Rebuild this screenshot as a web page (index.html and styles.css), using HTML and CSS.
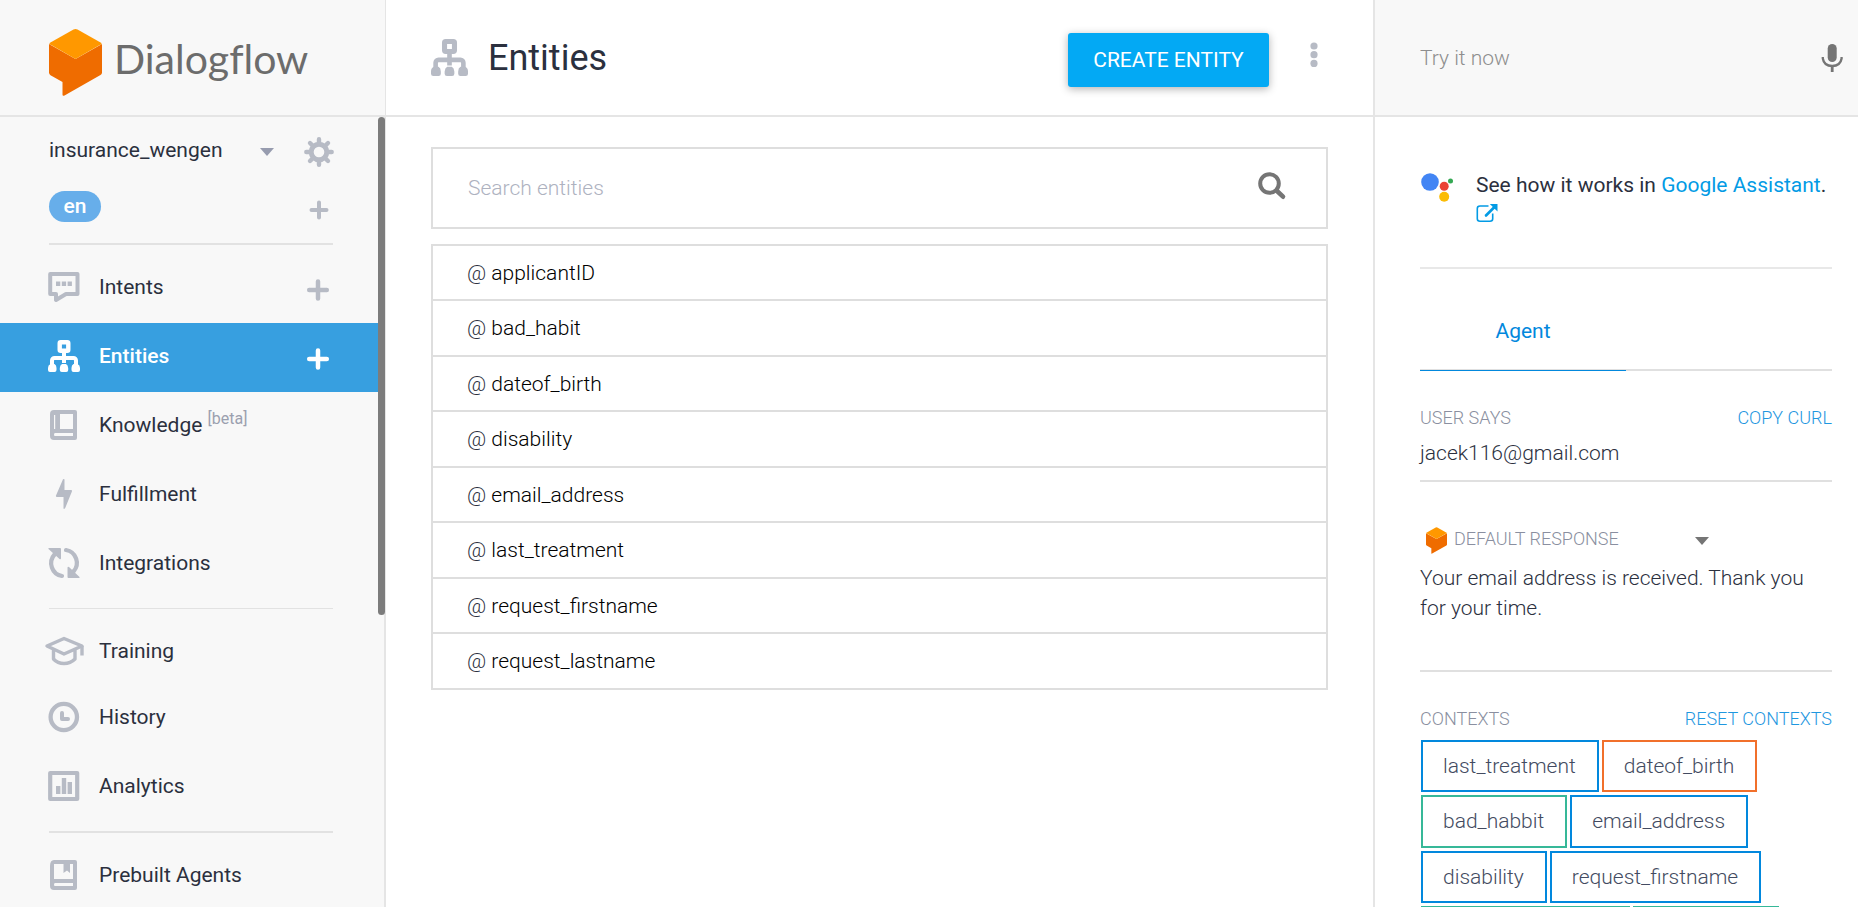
FILE: index.html
```html
<!DOCTYPE html>
<html lang="en">
<head>
<meta charset="utf-8">
<title>Dialogflow - Entities</title>
<link rel="stylesheet" href="styles.css">
</head>
<body>
<svg class="defs" aria-hidden="true">
  <symbol id="i-logo" viewBox="0 0 53 67">
    <path fill="#ef6c00" d="M0 15 L26.500 30 L53 15 V43.500 Q53 45 51.500 46 L15.500 66.500 Q13.500 67.500 13.500 65.500 V53 L1.500 46.200 Q0 45.200 0 43.500 Z"/>
    <path fill="#ff9800" d="M24.500 .6 Q26.500 -.4 28.500 .6 L52 13.800 Q53 14.500 52 15.200 L26.500 30 L1 15.200 Q0 14.500 1 13.800 Z"/>
  </symbol>
  <symbol id="i-tree" viewBox="0 0 32 32">
    <path fill="none" stroke="currentColor" stroke-width="4" d="M16 11v12M4 25v-4.500a2.500 2.500 0 0 1 2.500-2.500h19a2.500 2.500 0 0 1 2.500 2.500V25"/>
    <rect x="11.700" y="2.200" width="8.600" height="8.600" rx="1" fill="none" stroke="currentColor" stroke-width="4.400"/>
    <path fill="currentColor" d="M2.500 24h4q2 1 2 4v2q0 2-2 2h-4.500q-2 0-2-2v-2q0-3 2.500-4zM14 24h4q2 1 2.200 4v2q0 2-2 2h-4.400q-2 0-2-2v-2q.2-3 2.200-4zM25.500 24h4q2.500 1 2.500 4v2q0 2-2 2h-4.500q-2 0-2-2v-2q0-3 2-4z"/>
  </symbol>
  <symbol id="i-plus" viewBox="0 0 24 24">
    <path fill="none" stroke="currentColor" stroke-width="4.500" stroke-linecap="round" d="M12 3.500v17M3.200 12h17.600"/>
  </symbol>
  <symbol id="i-caret" viewBox="0 0 16 8"><path fill="currentColor" d="M1 0h14L8 8z"/></symbol>
</svg>

<div class="app">
  <aside class="sidebar">
    <header class="brand">
      <svg class="brand-mark"><use href="#i-logo"/></svg>
      <span class="brand-name">Dialogflow</span>
    </header>

    <div class="sidebar-body">
      <div class="agent-row">
        <label class="picker agent-picker">
          <select aria-label="Agent"><option>insurance_wengen</option></select>
          <svg class="caret"><use href="#i-caret"/></svg>
        </label>
        <button class="icon-button" aria-label="Agent settings">
          <svg class="gear" viewBox="0 0 30 30" fill="none" stroke="currentColor">
            <circle cx="15" cy="15" r="7.800" stroke-width="5"/>
            <path stroke-width="4.400" stroke-linecap="round" d="M15 2.300v4M15 23.700v4M2.300 15h4M23.700 15h4M6 6l3 3M21 21l3 3M24 6l-3 3M9 21l-3 3"/>
          </svg>
        </button>
      </div>
      <div class="lang-row">
        <span class="lang">en</span>
        <button class="icon-button" aria-label="Add language"><svg class="lang-plus" viewBox="0 0 30 24"><path fill="none" stroke="currentColor" stroke-width="4" stroke-linecap="round" d="M15 4.500v15M7.500 12h15"/></svg></button>
      </div>

      <nav class="nav">
        <hr class="rule">
        <div class="nav-item">
          <a href="#intents" class="nav-link">
            <svg class="nav-icon" viewBox="0 0 32 32"><path fill="none" stroke="currentColor" stroke-width="4" stroke-linejoin="round" d="M2.200 3h27.300v20H18l-10 6V23H2.200z"/><path fill="currentColor" d="M8 10.500h4.300v4.500H8zM13.800 10.500h4.300v4.500h-4.300zM19.600 10.500h4.300v4.500h-4.300z"/></svg>
            Intents</a>
          <a href="#new-intent" class="nav-plus" aria-label="Create intent"><svg><use href="#i-plus"/></svg></a>
        </div>
        <div class="nav-item nav-item--active">
          <a href="#entities" class="nav-link" aria-current="page">
            <svg class="nav-icon"><use href="#i-tree"/></svg>
            Entities</a>
          <a href="#new-entity" class="nav-plus" aria-label="Create entity"><svg><use href="#i-plus"/></svg></a>
        </div>
        <div class="nav-item">
          <a href="#knowledge" class="nav-link">
            <svg class="nav-icon" viewBox="0 0 32 32"><path fill="currentColor" fill-rule="evenodd" d="M6 1h21q2 0 2 2v26q0 2-2 2H6q-4 0-4-4V5q0-4 4-4zM12 5v15h13V5zM7 24q-1 0-1 1.500T7 27h18v-3zM6 6v14h1.200V6z"/></svg>
            <span>Knowledge <span class="beta">[beta]</span></span></a>
        </div>
        <div class="nav-item">
          <a href="#fulfillment" class="nav-link">
            <svg class="nav-icon" viewBox="0 0 32 32"><path fill="currentColor" d="M15 1.300q1.700-1.200 1.500 1V12h6.500q1.500 0 .9 1.600L17.200 30q-1.800 2.300-1.700-.5V19H9q-1.500 0-1-1.600z"/></svg>
            Fulfillment</a>
        </div>
        <div class="nav-item">
          <a href="#integrations" class="nav-link">
            <svg class="nav-icon" viewBox="0 0 32 32"><path fill="none" stroke="currentColor" stroke-width="4.200" stroke-linecap="round" d="M14 29A13 13 0 0 1 6.500 7.500M18 3a13 13 0 0 1 7.500 21.500"/><path fill="currentColor" d="M1 1h11q1 0 1 1v9q0 2-1.500 1L.5 2Q0 1 1 1zM31 31H20.500q-1 0-1-1v-9q0-2 1.500-1l10.500 10q.5 1-.5 1z"/></svg>
            Integrations</a>
        </div>
        <hr class="rule rule--thin">
        <div class="nav-item nav-item--short">
          <a href="#training" class="nav-link">
            <svg class="nav-icon" viewBox="0 0 32 32" fill="none" stroke="currentColor" stroke-width="3.400" stroke-linejoin="round"><path d="M-1 11 16 3.500 34 11 16 19zM5.500 14.500v9.500q4 4.500 10.500 4.500T27 24v-9.500"/><path d="M34 11v9.500"/></svg>
            Training</a>
        </div>
        <div class="nav-item">
          <a href="#history" class="nav-link">
            <svg class="nav-icon" viewBox="0 0 32 32" fill="none" stroke="currentColor"><circle cx="15.800" cy="16" r="13.200" stroke-width="4.300"/><path stroke-width="4" stroke-linecap="round" stroke-linejoin="round" d="M14 12v6h6"/></svg>
            History</a>
        </div>
        <div class="nav-item">
          <a href="#analytics" class="nav-link">
            <svg class="nav-icon" viewBox="0 0 32 32"><rect x="2.200" y="3" width="27" height="26" fill="none" stroke="currentColor" stroke-width="4.200" stroke-linejoin="round"/><path stroke="currentColor" stroke-width="4.400" stroke-linecap="butt" d="M10.200 16v8M16 8v16M21.800 12v12"/></svg>
            Analytics</a>
        </div>
        <hr class="rule">
        <div class="nav-item">
          <a href="#prebuilt" class="nav-link">
            <svg class="nav-icon" viewBox="0 0 32 32"><path fill="currentColor" fill-rule="evenodd" d="M6 1h21q2 0 2 2v26q0 2-2 2H6q-4 0-4-4V7q0-6 4-6zM6 5v15h19V5h-3v9l-3-2.500L15.500 14V5zM7 24q-1 0-1 1.500T7 27h18v-3z"/></svg>
            Prebuilt Agents</a>
        </div>
      </nav>
      <div class="scroll-thumb"></div>
    </div>
  </aside>

  <main class="main">
    <header class="main-head">
      <svg class="title-icon"><use href="#i-tree"/></svg>
      <h1>Entities</h1>
      <button class="create">CREATE ENTITY</button>
      <button class="icon-button more" aria-label="More options">
        <svg viewBox="0 0 8 26" fill="currentColor"><circle cx="4" cy="4" r="3.600"/><circle cx="4" cy="12.700" r="3.600"/><circle cx="4" cy="21.400" r="3.600"/></svg>
      </button>
    </header>
    <div class="main-body">
      <form class="search">
        <input type="text" placeholder="Search entities" aria-label="Search entities">
        <button type="button" class="icon-button search-button" aria-label="Search">
          <svg viewBox="0 0 28 28" fill="none" stroke="currentColor"><circle cx="11.500" cy="11.500" r="9.300" stroke-width="4"/><path stroke-width="4.600" stroke-linecap="round" d="m18.500 18.500 6.500 6.200"/></svg>
        </button>
      </form>
      <ul class="entities">
        <li><a href="#e1"><span class="at">@</span> applicantID</a></li>
        <li><a href="#e2"><span class="at">@</span> bad_habit</a></li>
        <li><a href="#e3"><span class="at">@</span> dateof_birth</a></li>
        <li><a href="#e4"><span class="at">@</span> disability</a></li>
        <li><a href="#e5"><span class="at">@</span> email_address</a></li>
        <li><a href="#e6"><span class="at">@</span> last_treatment</a></li>
        <li><a href="#e7"><span class="at">@</span> request_firstname</a></li>
        <li><a href="#e8"><span class="at">@</span> request_lastname</a></li>
      </ul>
    </div>
  </main>

  <aside class="tester">
    <header class="try">
      <input type="text" placeholder="Try it now" aria-label="Try it now">
      <button class="icon-button mic" aria-label="Speak">
        <svg viewBox="0 0 22 30"><rect x="6.700" y="1" width="9" height="18" rx="4.500" fill="currentColor"/><path fill="none" stroke="currentColor" stroke-width="2.300" d="M1.800 14v1.500Q3 23 11.200 23T20.600 15.500V14"/><path stroke="currentColor" stroke-width="2.800" d="M11.200 23v6"/></svg>
      </button>
    </header>
    <div class="tester-body">
      <section class="assistant">
        <svg class="assistant-icon" viewBox="0 0 34 30"><circle cx="10" cy="10" r="8.800" fill="#4285f4"/><circle cx="24.200" cy="14.200" r="4.500" fill="#ea4335"/><circle cx="24.200" cy="24.700" r="5" fill="#fbbc05"/><circle cx="30.500" cy="9" r="2.500" fill="#34a853"/></svg>
        <p>See how it works in <a href="#assistant">Google Assistant</a>. <a href="#assistant" aria-label="Open Google Assistant"><svg class="external" viewBox="0 0 22 19"><path fill="none" stroke="currentColor" stroke-width="1.600" d="M12.500 2H4Q1.300 2 1.300 4.500v10.200Q1.300 17.200 4 17.200h10q2.700 0 2.700-2.500V9.500"/><path fill="none" stroke="currentColor" stroke-width="2.600" stroke-linecap="round" d="M10 11.500 18 3.500"/><path fill="currentColor" d="M13.800 0H21.500V7.500z"/></svg></a></p>
      </section>
      <div class="tabs" role="tablist"><button class="tab" role="tab" aria-selected="true">Agent</button></div>
      <section class="says">
        <div class="caption"><h2>USER SAYS</h2><a href="#curl">COPY CURL</a></div>
        <p>jacek116@gmail.com</p>
      </section>
      <section class="response">
        <div class="response-head">
          <svg class="mini-logo"><use href="#i-logo"/></svg>
          <label class="picker response-picker">
            <select aria-label="Response"><option>DEFAULT RESPONSE</option></select>
            <svg class="caret"><use href="#i-caret"/></svg>
          </label>
        </div>
        <p>Your email address is received. Thank you for your time.</p>
      </section>
      <section class="contexts">
        <div class="caption"><h2>CONTEXTS</h2><a href="#reset">RESET CONTEXTS</a></div>
        <ul class="chips">
          <li class="chip">last_treatment</li>
          <li class="chip chip--orange">dateof_birth</li>
          <li class="chip chip--green">bad_habbit</li>
          <li class="chip">email_address</li>
          <li class="chip">disability</li>
          <li class="chip">request_firstname</li>
          <li class="chip chip--green">request_lastname</li>
          <li class="chip chip--green">bad_habbit</li>
        </ul>
      </section>
    </div>
  </aside>
</div>
</body>
</html>
```

FILE: styles.css
```css
:root {
  --ink: #2b303e;
  --icon: #b7bbc5;
  --line: #e5e5e5;
  --box-line: #dedede;
  --panel: #f8f8f8;
  --link: #039be5;
  --muted: #9ba0af;
}
* { box-sizing: border-box; margin: 0; padding: 0; }
body { font: 400 21px/30px Roboto, "Liberation Sans", sans-serif; color: var(--ink); background: #fff; }
a { color: inherit; text-decoration: none; }
ul { list-style: none; }
button, input, select { font: inherit; color: inherit; background: none; border: 0; outline: 0; }
button { cursor: pointer; }
svg { display: block; flex: none; overflow: visible; }
.defs { position: absolute; width: 0; height: 0; }
.icon-button { display: block; color: var(--icon); }

.app { display: grid; grid-template-columns: 386px minmax(0, 1fr) 485px; height: 100vh; overflow: hidden; }
.sidebar, .main, .tester { display: flex; flex-direction: column; min-width: 0; min-height: 0; }
.brand, .main-head, .try { display: flex; align-items: center; flex: none; height: 117px; border-bottom: 2px solid var(--line); }

/* Drop-downs: the caret shares the select's grid cell */
.picker { display: grid; align-items: center; }
.picker select { grid-area: 1 / 1; appearance: none; width: 100%; cursor: pointer; }
.picker .caret { grid-area: 1 / 1; justify-self: end; width: 16px; height: 8px; margin-top: 3px; pointer-events: none; }

/* Sidebar */
.sidebar { background: var(--panel); }
.brand { align-items: flex-start; gap: 12px; padding: 29px 0 0 49px; border-right: 1px solid var(--line); }
.brand-mark { width: 53px; height: 67px; }
.brand-name { font: 400 41px/60px Lato, sans-serif; font-variant-ligatures: none; color: #6c6c6c; }
.sidebar-body { position: relative; flex: 1; min-height: 0; padding-right: 6px; border-right: 2px solid var(--line); }
.scroll-thumb { position: absolute; top: 0; right: -1px; width: 7px; height: 63%; border-radius: 4px; background: #7c7c7c; }
.agent-row { display: flex; align-items: center; height: 66px; padding: 0 44px 0 49px; }
.agent-picker { width: 226px; margin-right: auto; }
.agent-picker .caret { color: #979caf; }
.gear { width: 30px; height: 30px; margin-top: 4px; }
.lang-row { display: flex; align-items: flex-end; justify-content: space-between; padding: 8px 44px 0 49px; margin-bottom: 21px; }
.lang { min-width: 52px; height: 31px; text-align: center; border-radius: 16px; background: #67aeea; color: #fff; font-weight: 500; line-height: 31px; }
.lang-plus { width: 30px; height: 24px; }
.nav { height: 664px; overflow: hidden; }
.rule { height: 2px; margin: 9px 45px 9px 49px; border: 0; background: #e2e2e2; }
.nav .rule:first-child { margin-top: 0; }
.rule--thin { height: 1px; }
.nav-item { display: flex; align-items: center; height: 69px; padding: 0 48px; }
.nav-item--short { height: 66px; padding-top: 3px; }
.nav-link { display: flex; align-items: center; flex: 1; gap: 19px; padding-bottom: 3px; }
.nav-icon { width: 32px; height: 32px; color: var(--icon); }
.nav-plus { color: var(--icon); padding-top: 2px; }
.nav-plus svg { width: 24px; height: 24px; }
.nav-item--active { background: #379fe0; color: #fff; font-weight: 500; }
.nav-item--active svg { color: #fff; }
.beta { font-size: 16px; vertical-align: 8px; line-height: 16px; color: var(--muted); }

/* Entities */
.main-head { padding: 0 50px 0 45px; }
.title-icon { width: 37px; height: 37px; color: var(--icon); }
h1 { flex: 1; margin-left: 20px; font-size: 36px; line-height: 42px; font-weight: 400; }
.create { min-width: 201px; height: 54px; margin: 5px 0 0; border-radius: 3px; background: #03a9f4; color: #fff; box-shadow: 0 2px 8px rgba(0, 0, 0, .3); }
.more { margin: 0 5px 5px 41px; }
.more svg { width: 8px; height: 26px; }
.main-body { display: flex; flex-direction: column; gap: 15px; padding: 30px 45px; }
.search { display: flex; align-items: center; height: 82px; padding: 0 40px 0 35px; border: 2px solid var(--box-line); }
.search input { flex: 1; min-width: 0; font-weight: 300; }
.search input::placeholder { color: #aeb2bf; }
.search-button { color: #757575; margin-bottom: 5px; }
.search-button svg { width: 28px; height: 28px; }
.entities { border: solid var(--box-line); border-width: 2px 2px 0; font-weight: 300; color: #000; }
.entities li { min-height: 55px; border-bottom: 2px solid var(--box-line); }
.entities li:nth-child(even) { min-height: 56px; }
.entities a { display: block; padding: 12px 34px 11px; }
.at { color: var(--ink); }

/* Test console */
.tester { border-left: 2px solid var(--line); font-weight: 300; }
.try { padding: 0 15px 0 45px; background: var(--panel); }
.try input { flex: 1; min-width: 0; }
.try input::placeholder { color: #8e8e8e; }
.mic { color: #757575; }
.mic svg { width: 22px; height: 30px; }
.tester-body { padding: 0 26px 0 45px; }
.assistant { display: flex; gap: 22px; padding: 54px 0 38px; border-bottom: 2px solid #e8e8e8; font-weight: 400; line-height: 29px; }
.assistant a { color: var(--link); }
.assistant-icon { width: 34px; height: 30px; margin-top: 1px; }
.external { display: inline-block; width: 22px; height: 19px; vertical-align: -2px; }
.tabs { display: flex; box-shadow: inset 0 -2px #e0e0e0; }
.tab { width: 50%; padding: 48px 0 24px; border-bottom: 1px solid #0288dd; color: #0288dd; font-weight: 400; line-height: 29px; }
.caption { display: flex; justify-content: space-between; font-size: 18px; line-height: 24px; color: #8a8fa0; }
.caption h2 { font-size: inherit; font-weight: inherit; }
.caption a { color: #1f97df; }
.says { padding: 35px 0 12px; border-bottom: 2px solid #e0e0e0; }
.says p { margin-top: 8px; }
.response { padding: 45px 0 47px; border-bottom: 2px solid #e0e0e0; }
.response-head { display: flex; gap: 7px; height: 24px; padding-left: 6px; margin-bottom: 12px; }
.mini-logo { width: 21px; height: 27px; }
.response-picker { width: 256px; font-size: 18px; line-height: 24px; }
.response-picker select { color: #8a8fa0; }
.response-picker .caret { color: #757575; }
.contexts { padding-top: 35px; }
.chips { display: flex; flex-wrap: wrap; gap: 3px; padding: 9px 0 0 1px; }
.chip { min-height: 52px; padding: 9px 21px 9px 20px; border: 2px solid #0288dd; color: #434b61; }
.chip:nth-child(4) { min-height: 53px; }
.chip--orange { border-color: #f1702b; }
.chip--green { border-color: #36b898; }
```
